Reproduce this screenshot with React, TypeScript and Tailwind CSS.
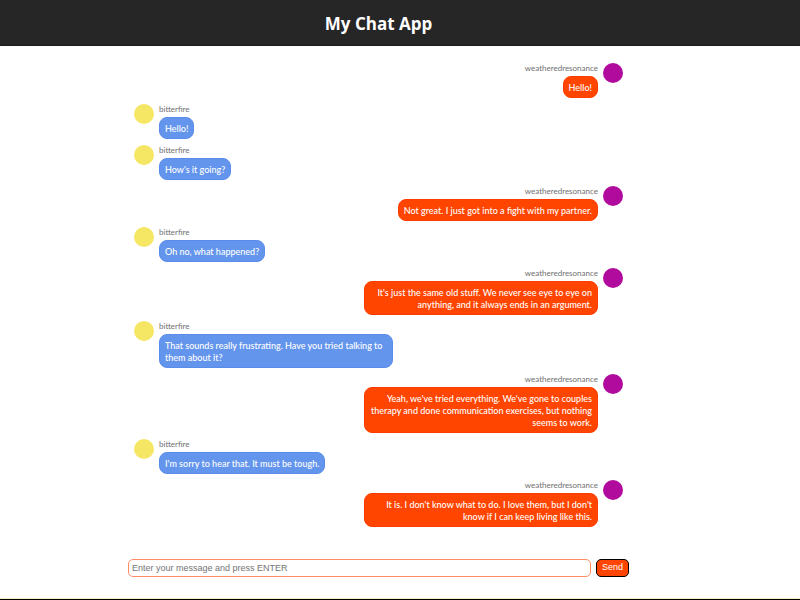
import { useState } from "react";

type Message = { user: string; text: string; own: boolean };

const INITIAL: Message[] = [
  { user: "weatheredresonance", text: "Hello!", own: true },
  { user: "bitterfire", text: "Hello!", own: false },
  { user: "bitterfire", text: "How's it going?", own: false },
  { user: "weatheredresonance", text: "Not great. I just got into a fight with my partner.", own: true },
  { user: "bitterfire", text: "Oh no, what happened?", own: false },
  { user: "weatheredresonance", text: "It's just the same old stuff. We never see eye to eye on anything, and it always ends in an argument.", own: true },
  { user: "bitterfire", text: "That sounds really frustrating. Have you tried talking to them about it?", own: false },
  { user: "weatheredresonance", text: "Yeah, we've tried everything. We've gone to couples therapy and done communication exercises, but nothing seems to work.", own: true },
  { user: "bitterfire", text: "I'm sorry to hear that. It must be tough.", own: false },
  { user: "weatheredresonance", text: "It is. I don't know what to do. I love them, but I don't know if I can keep living like this.", own: true },
];

function MessageRow({ message }: { message: Message }) {
  const { own, user, text } = message;
  return (
    <li className={own ? "flex flex-row-reverse gap-[5px] text-right" : "flex gap-[5px]"}>
      <span className={own ? "size-5 shrink-0 rounded-full bg-[#b00b9c]" : "size-5 shrink-0 rounded-full bg-[#f5e663]"} />
      <div className={own ? "flex max-w-[234px] flex-col items-end gap-[3px]" : "flex max-w-[234px] flex-col items-start gap-[3px]"}>
        <span className="text-[8px] leading-[10px] text-[#707070]">{user}</span>
        <p
          className={
            own
              ? "rounded-lg border border-[#ff3c00] bg-[#ff4500] px-[5px] pt-[5px] pb-[3px] text-[9px] leading-3 font-medium text-white"
              : "rounded-lg border border-[#5a8ceb] bg-[#6495ed] px-[5px] pt-[5px] pb-[3px] text-[9px] leading-3 font-medium text-white"
          }
        >
          {text}
        </p>
      </div>
    </li>
  );
}

export default function App() {
  const [messages, setMessages] = useState(INITIAL);
  const [draft, setDraft] = useState("");

  return (
    <div className="flex min-h-screen flex-col border-b border-black bg-white">
      <header className="flex h-[46px] items-center justify-center border-b border-[#1c1c1c] bg-[#262626] pt-0.5 pr-[43px] font-['Open_Sans','Noto_Sans',sans-serif]">
        <h1 className="text-[17px] leading-6 font-bold text-white">My Chat App</h1>
      </header>
      <main className="flex grow flex-col items-center border-b border-[#f7edc8] pt-[17px] pr-[43px]">
        <div className="flex w-full max-w-[501px] grow flex-col justify-between">
          <ul className="flex flex-col gap-[6px] px-[6px] font-['Lato','Open_Sans',sans-serif]">
            {messages.map((message, i) => (
              <MessageRow key={i} message={message} />
            ))}
          </ul>
          <form
            className="mt-4 mb-[21px] flex gap-[5px] font-['Liberation_Sans',Arial,sans-serif] text-[9px]"
            onSubmit={(e) => {
              e.preventDefault();
              if (!draft.trim()) return;
              setMessages([...messages, { user: "weatheredresonance", text: draft, own: true }]);
              setDraft("");
            }}
          >
            <input
              aria-label="Message"
              className="h-[18px] min-w-0 grow rounded-[5px] border border-[#ff8c66] px-[3px] text-black outline-none placeholder:text-[#757575]"
              placeholder="Enter your message and press ENTER"
              value={draft}
              onChange={(e) => setDraft(e.target.value)}
            />
            <button type="submit" className="h-[18px] w-[33px] rounded-[5px] border border-black bg-[#ff4500] text-white">
              Send
            </button>
          </form>
        </div>
      </main>
    </div>
  );
}
